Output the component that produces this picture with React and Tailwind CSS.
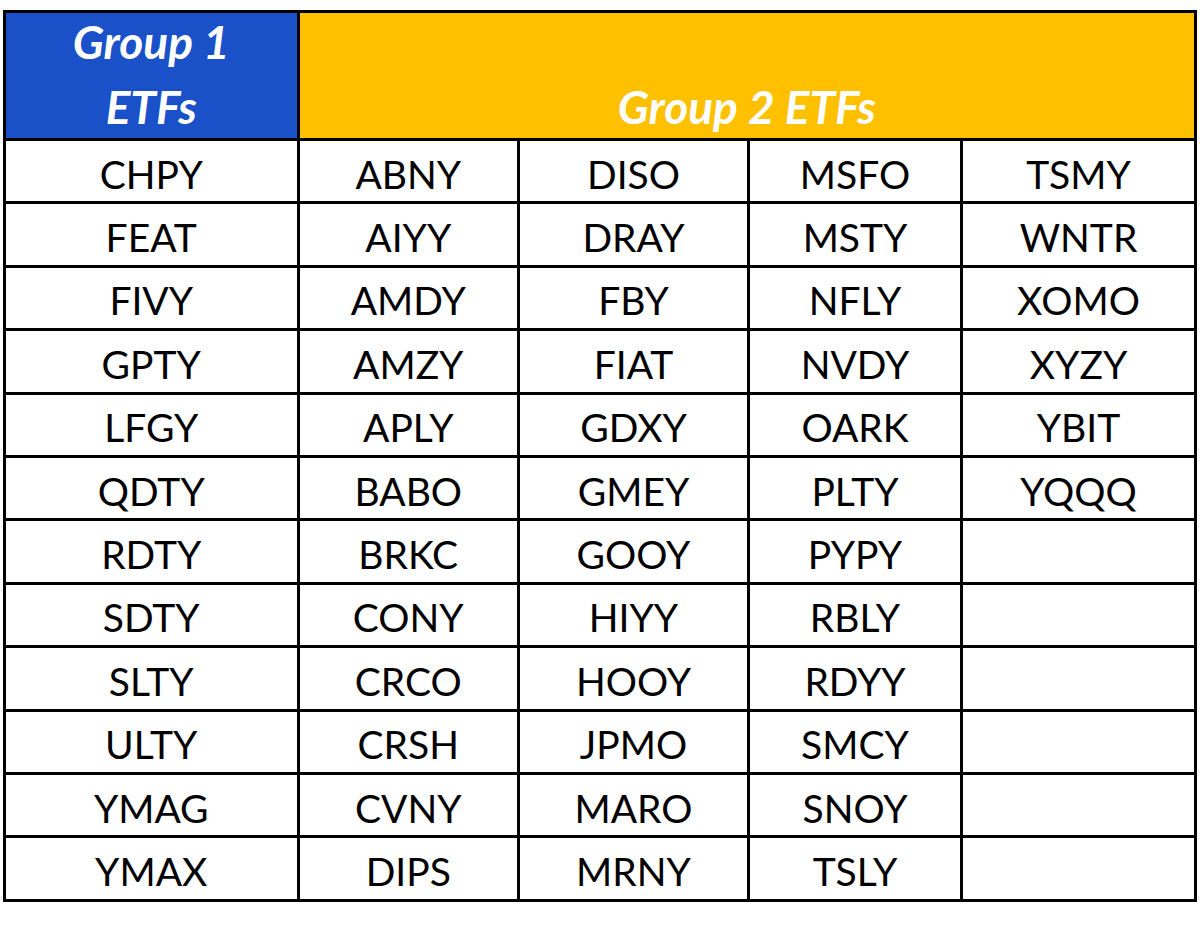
export default function App() {
  const cols = [
    ["CHPY","FEAT","FIVY","GPTY","LFGY","QDTY","RDTY","SDTY","SLTY","ULTY","YMAG","YMAX"],
    ["ABNY","AIYY","AMDY","AMZY","APLY","BABO","BRKC","CONY","CRCO","CRSH","CVNY","DIPS"],
    ["DISO","DRAY","FBY","FIAT","GDXY","GMEY","GOOY","HIYY","HOOY","JPMO","MARO","MRNY"],
    ["MSFO","MSTY","NFLY","NVDY","OARK","PLTY","PYPY","RBLY","RDYY","SMCY","SNOY","TSLY"],
    ["TSMY","WNTR","XOMO","XYZY","YBIT","YQQQ","","","","","",""],
  ];
  const rows = Array.from({ length: 12 }, (_, r) => cols.map((c) => c[r]));
  return (
    <div className="w-[1200px] h-[929px] bg-white pt-[10px] pl-[3px]" style={{ fontFamily: "Lato, 'Open Sans', sans-serif" }}>
      <table className="table-fixed border-collapse w-[1194px] text-black">
        <colgroup>
          <col className="w-[293.5px]" />
          <col className="w-[220.5px]" />
          <col className="w-[230px]" />
          <col className="w-[213px]" />
          <col className="w-[234px]" />
        </colgroup>
        <thead>
          <tr className="h-[128px]">
            <th className="border-[3px] border-black bg-[#1a50c8] text-white italic font-bold text-[46px] align-top p-0 pt-[6px]">
              <div className="leading-none">Group 1</div>
              <div className="leading-none mt-[19px]">ETFs</div>
            </th>
            <th colSpan={4} className="border-[3px] border-black bg-[#ffc000] text-white italic font-bold text-[46px] leading-none align-top p-0 pt-[71px]">
              Group 2 ETFs
            </th>
          </tr>
        </thead>
        <tbody>
          {rows.map((row, i) => (
            <tr key={i} className="h-[63.4px]">
              {row.map((v, j) => (
                <td key={j} className="border-[3px] border-black text-center text-[39px] leading-none p-0 pt-[6px] font-normal">
                  {v}
                </td>
              ))}
            </tr>
          ))}
        </tbody>
      </table>
    </div>
  );
}
